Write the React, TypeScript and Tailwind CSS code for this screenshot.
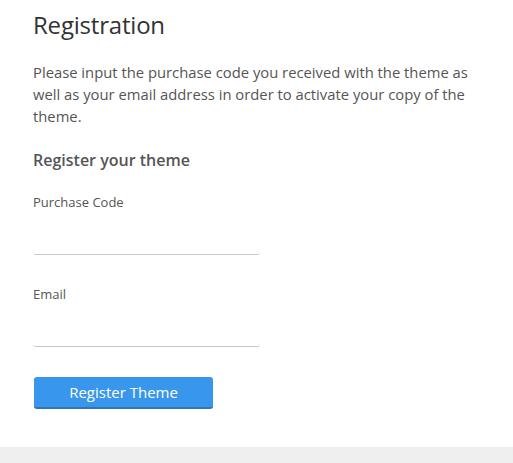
export default function App() {
  return (
    <div
      className="min-h-[463px] flex flex-col bg-white text-[#555]"
      style={{ fontFamily: '"Open Sans", "Noto Sans", sans-serif' }}
    >
      <div className="flex-1 px-[33px] pt-[8px]">
        <h1 className="text-[24px] leading-[34px] tracking-[-0.2px] text-[#333]">Registration</h1>
        <p className="mt-[19px] w-[460px] text-[14.8px] leading-[22px] text-[#555]">
          Please input the purchase code you received with the theme as well as
          your email address in order to activate your copy of the theme.
        </p>
        <h2 className="mt-[22px] text-[16px] leading-[22px] font-semibold text-[#555]">
          Register your theme
        </h2>
        <form className="mt-[22px]" onSubmit={(e) => e.preventDefault()}>
          <label className="block text-[13px] leading-[18px] text-[#555]">
            Purchase Code
          </label>
          <input
            type="text"
            className="mt-[4px] block w-[227px] h-[40px] rounded-[3px] border-b border-[#c8c8c8] outline-none text-[14px]"
          />
          <label className="mt-[30px] block text-[13px] leading-[18px] text-[#555]">
            Email
          </label>
          <input
            type="email"
            className="mt-[4px] block w-[227px] h-[40px] rounded-[3px] border-b border-[#c8c8c8] outline-none text-[14px]"
          />
          <button
            type="submit"
            className="mt-[30px] ml-px w-[179px] h-[32px] rounded-[3px] bg-[#3897ec] border-b-2 border-[#2a77be] text-white text-[15px]"
          >
            Register Theme
          </button>
        </form>
      </div>
      <div className="h-[16px] bg-[#efefef]" />
    </div>
  );
}
